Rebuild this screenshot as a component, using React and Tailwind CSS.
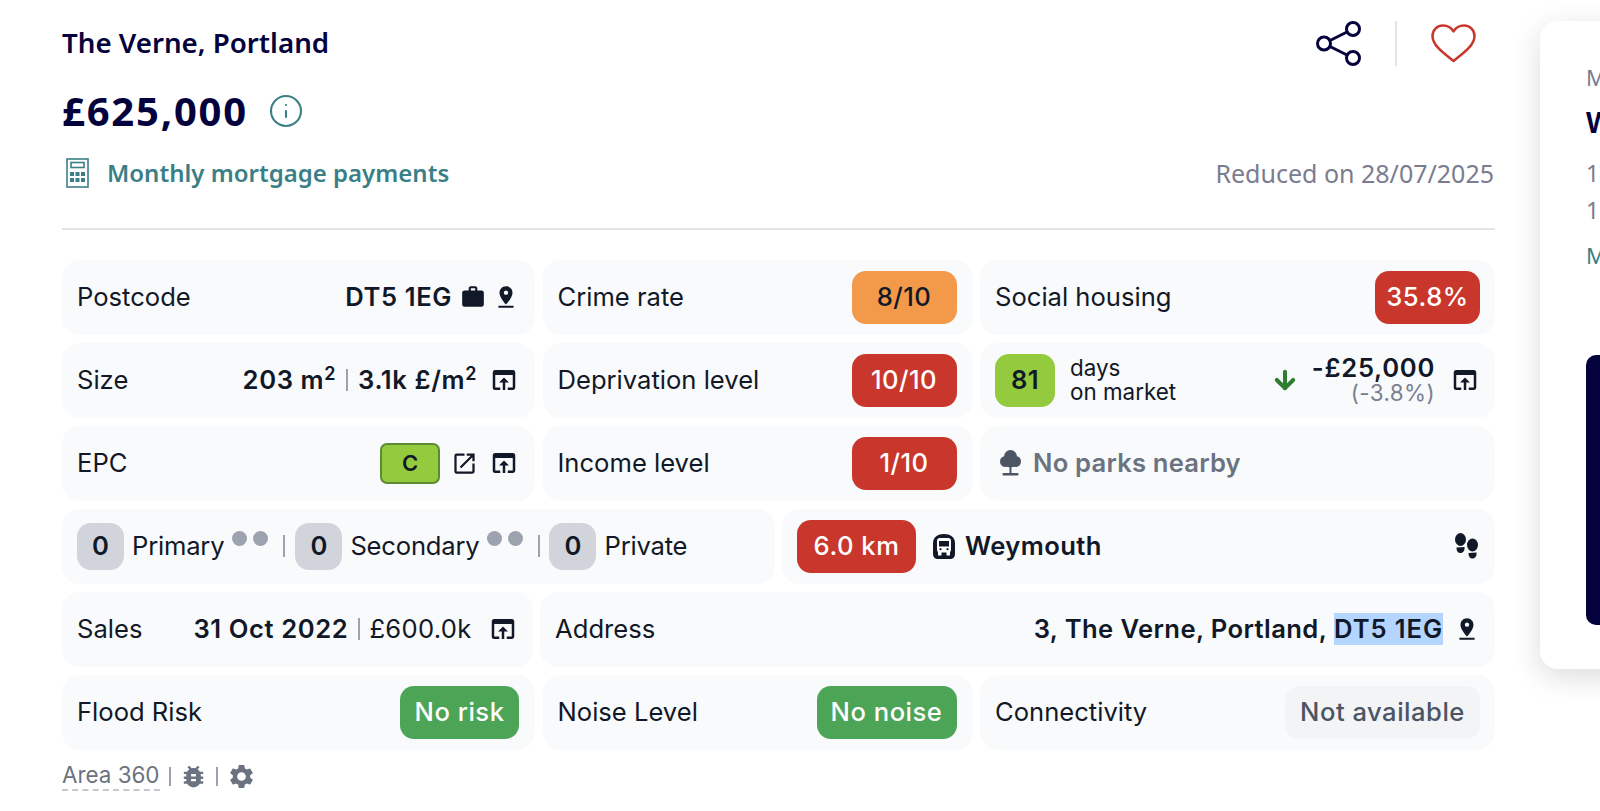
import { ArrowDown, Info } from 'lucide-react'
import { MdWork, MdPinDrop, MdOpenInBrowser, MdOpenInNew, MdBugReport, MdSettings } from 'react-icons/md'

const inter = 'font-["Inter","Liberation_Sans",sans-serif]'
const head = 'font-["Noto_Sans","Open_Sans",sans-serif]'

function Cell({ className = '', children }) {
  return (
    <div className={`flex h-[75px] items-center rounded-[18px] bg-[#f9fafb] px-[15px] ${className}`}>
      {children}
    </div>
  )
}

function Badge({ className = '', children }) {
  return (
    <span className={`flex h-[53px] items-center justify-center rounded-[14px] text-[25.6px] font-medium tracking-[0.5px] ${className}`}>
      {children}
    </span>
  )
}

function School({ label, dots }) {
  return (
    <>
      <span className="flex h-[47px] w-[47px] items-center justify-center rounded-[14px] bg-[#d1d5db] font-semibold">0</span>
      <span className="ml-[8px] tracking-[-0.2px]">{label}</span>
      {dots && (
        <span className="mb-[16px] ml-[8px] flex gap-[6px]">
          <i className="h-[15px] w-[15px] rounded-full bg-[#9ca3af]" />
          <i className="h-[15px] w-[15px] rounded-full bg-[#9ca3af]" />
        </span>
      )}
    </>
  )
}

function Sep({ className = 'mx-[11px]' }) {
  return <span className={`h-[22px] w-[2px] bg-[#9ca3af] ${className}`} />
}

function BrowserIcon({ className = '' }) {
  return <MdOpenInBrowser className={`h-[30px] w-[30px] shrink-0 ${className}`} />
}

function TreeIcon() {
  return (
    <svg className="h-[26px] w-[21px]" viewBox="0 0 21 26" fill="#4b5563">
      <circle cx="10.500" cy="6.500" r="6.500" />
      <circle cx="5.500" cy="11.500" r="5.500" />
      <circle cx="15.500" cy="11.500" r="5.500" />
      <circle cx="10.500" cy="11.500" r="6" />
      <rect x="9.500" y="15" width="2" height="8" />
      <rect x="2.500" y="23" width="16" height="2.500" rx="1" />
    </svg>
  )
}

function BusIcon() {
  return (
    <svg className="h-[25px] w-[22px]" viewBox="0 0 22 25">
      <path d="M11 0C17 0 22 3 22 9v11c0 3-2 5-5 5H5c-3 0-5-2-5-5V9C0 3 5 0 11 0Z" fill="#111827" />
      <rect x="4" y="4" width="14" height="14.500" rx="3" fill="#fff" />
      <rect x="6" y="7" width="10" height="5.500" fill="#111827" />
      <rect x="5" y="18" width="3.500" height="3.500" fill="#fff" />
      <rect x="13.500" y="18" width="3.500" height="3.500" fill="#fff" />
      <circle cx="7.500" cy="15.200" r="1.100" fill="#111827" />
      <circle cx="14.500" cy="15.200" r="1.100" fill="#111827" />
    </svg>
  )
}

function Sole({ x, y }) {
  return (
    <g transform={`translate(${x} ${y})`}>
      <ellipse cx="5.500" cy="6.500" rx="5.500" ry="6.500" />
      <path d="M1.500 14.500 9.500 14c.4 3.500-1.300 6-4 6S1.300 18 1.500 14.500Z" />
    </g>
  )
}

function StepsIcon() {
  return (
    <svg className="h-[26px] w-[23px]" viewBox="0 0 23 26" fill="#111827">
      <Sole x={0} y={0} />
      <Sole x={12} y={5.500} />
    </svg>
  )
}

export default function App() {
  return (
    <div className="flex h-[811px] overflow-hidden bg-white text-[#111827]">
      <div className={`ml-[62px] w-[1433px] shrink-0 ${inter}`}>
        {/* Header */}
        <div className={`relative h-[230px] border-b-2 border-[#e2e4e8] text-[#04023c] ${head}`}>
          <h1 className="pt-[24px] text-[27.700px] font-semibold leading-[36px]">The Verne, Portland</h1>
          <div className="mt-[26px] flex h-[50px] items-center">
            <span className="text-[40px] font-bold leading-[50px] tracking-[1.800px]">£625,000</span>
            <Info className="ml-[20px] h-[36px] w-[36px] text-[#3b7f86]" strokeWidth={1.400} />
          </div>
          <div className="mt-[20.500px] flex items-center justify-between">
            <div className="flex items-center">
              <svg className="ml-[4px] h-[30px] w-[23px]" viewBox="0 0 23 30" fill="none" stroke="#3b7f86" strokeWidth="1.600">
                <rect x="1" y="1" width="21" height="28" />
                <rect x="5" y="4.500" width="13" height="5" />
                <g fill="#3b7f86" stroke="none">
                  <rect x="4" y="14" width="4" height="4" /><rect x="9.500" y="14" width="4" height="4" /><rect x="15" y="14" width="4" height="4" />
                  <rect x="4" y="20" width="4" height="4" /><rect x="9.500" y="20" width="4" height="4" /><rect x="15" y="20" width="4" height="4" />
                </g>
              </svg>
              <span className="ml-[18px] text-[24px] font-semibold leading-[32px] text-[#3b7f86]">Monthly mortgage payments</span>
            </div>
            <span className="mr-[1px] text-[25px] leading-[32px] text-[#7a7c8f]">Reduced on 28/07/2025</span>
          </div>
          <div className="absolute right-[19px] top-[21px] flex items-center">
            <svg className="h-[45px] w-[45px]" viewBox="0 0 45 45" fill="none" stroke="#04023c" strokeWidth="3">
              <circle cx="37" cy="8" r="6.500" /><circle cx="8" cy="22.500" r="6.500" /><circle cx="37" cy="37" r="6.500" />
              <path d="M14 19.500 31 11M14 25.500 31 34" />
            </svg>
            <span className="mx-[34px] h-[45px] w-[2px] bg-[#e2e4e8]" />
            <svg className="h-[39px] w-[45px]" viewBox="0 0 45 39" fill="none" stroke="#c9372c" strokeWidth="2.500">
              <path d="M22.500 37C11 28 1.500 21 1.500 12 1.500 5.500 6.500 1.500 12 1.500c4.500 0 8.500 2.500 10.500 6 2-3.500 6-6 10.500-6 5.500 0 10.500 4 10.500 10.500 0 9-9.500 16-21 25Z" strokeLinejoin="round" />
            </svg>
          </div>
        </div>

        {/* Facts */}
        <div className="mt-[29.500px] flex flex-col gap-[8px] text-[25.6px] leading-[32px]">
          <div className="flex gap-[7.500px]">
            <Cell className="w-[473px] justify-between pr-[16px]">
              <span>Postcode</span>
              <span className="flex items-center font-semibold tracking-[0.6px]">DT5 1EG<MdWork className="ml-[8px] h-[26px] w-[26px]" /><MdPinDrop className="ml-[7px] h-[26px] w-[26px]" /></span>
            </Cell>
            <Cell className="w-[430px] justify-between pr-[16px]">
              <span>Crime rate</span>
              <Badge className="w-[105px] bg-[#f2994a]">8/10</Badge>
            </Cell>
            <Cell className="flex-1 justify-between">
              <span>Social housing</span>
              <Badge className="w-[105px] bg-[#c9372c] text-white">35.8%</Badge>
            </Cell>
          </div>
          <div className="flex gap-[7.500px]">
            <Cell className="w-[473px] justify-between pr-[16px]">
              <span>Size</span>
              <span className="flex items-center">
                <b className="font-semibold tracking-[0.6px]">203 m<sup className="text-[18px]">2</sup></b>
                <Sep className="mx-[10px]" />
                <b className="font-semibold tracking-[0.6px]">3.1k £/m<sup className="text-[18px]">2</sup></b>
                <BrowserIcon className="ml-[12px]" />
              </span>
            </Cell>
            <Cell className="w-[430px] justify-between pr-[16px]">
              <span>Deprivation level</span>
              <Badge className="w-[105px] bg-[#c9372c] text-white">10/10</Badge>
            </Cell>
            <Cell className="flex-1">
              <Badge className="w-[60px] bg-[#94cb3e] font-semibold">81</Badge>
              <span className="ml-[15px] text-[22.400px] leading-[24px]">days<br />on market</span>
              <ArrowDown className="ml-auto h-[28px] w-[28px] text-[#2e7d32]" strokeWidth={3.500} />
              <span className="ml-[13px] flex flex-col items-end">
                <b className="text-[25.600px] font-semibold leading-[25px] tracking-[0.7px]">-£25,000</b>
                <span className="text-[22.400px] leading-[25px] tracking-[0.4px] text-[#7a808f]">(-3.8%)</span>
              </span>
              <BrowserIcon className="ml-[15px]" />
            </Cell>
          </div>
          <div className="flex gap-[7.500px]">
            <Cell className="w-[473px] justify-between pr-[16px]">
              <span>EPC</span>
              <span className="flex items-center">
                <span className="flex h-[41px] w-[60px] items-center justify-center rounded-[7px] border-2 border-[#5f8a35] bg-[#94cb3e] text-[22px] font-semibold">C</span>
                <MdOpenInNew className="ml-[11px] h-[27px] w-[27px]" />
                <BrowserIcon className="ml-[11px]" />
              </span>
            </Cell>
            <Cell className="w-[430px] justify-between pr-[16px]">
              <span>Income level</span>
              <Badge className="w-[105px] bg-[#c9372c] text-white">1/10</Badge>
            </Cell>
            <Cell className="flex-1">
              <span className="ml-[5px]"><TreeIcon /></span>
              <span className="ml-[12px] font-semibold tracking-[0.2px] text-[#6b7280]">No parks nearby</span>
            </Cell>
          </div>
          <div className="flex gap-[7.500px]">
            <Cell className="w-[712.500px]">
              <School label="Primary" dots />
              <Sep className="ml-[15px] mr-[10px]" />
              <School label="Secondary" dots />
              <Sep className="ml-[15px] mr-[9px]" />
              <School label="Private" />
            </Cell>
            <Cell className="flex-1">
              <Badge className="w-[119px] bg-[#c9372c] text-white">6.0 km</Badge>
              <span className="ml-[17px]"><BusIcon /></span>
              <span className="ml-[10px] font-semibold tracking-[0.4px]">Weymouth</span>
              <span className="ml-auto mr-[2px]"><StepsIcon /></span>
            </Cell>
          </div>
          <div className="flex gap-[7.500px]">
            <Cell className="w-[470.600px] justify-between">
              <span>Sales</span>
              <span className="flex items-center">
                <b className="font-semibold tracking-[0.6px]">31 Oct 2022</b>
                <Sep className="ml-[10px] mr-[9px]" />
                <span className="tracking-[0.3px]">£600.0k</span>
                <BrowserIcon className="ml-[16px]" />
              </span>
            </Cell>
            <Cell className="flex-1 justify-between">
              <span>Address</span>
              <span className="flex items-center font-semibold tracking-[0.4px]">
                3, The Verne, Portland,&nbsp;<span className="bg-[#b4d5fe] tracking-[0.9px]">DT5 1EG</span>
                <MdPinDrop className="ml-[11px] h-[26px] w-[26px]" />
              </span>
            </Cell>
          </div>
          <div className="flex gap-[7.500px]">
            <Cell className="w-[473px] justify-between pr-[16px]">
              <span>Flood Risk</span>
              <Badge className="w-[119px] bg-[#4ca456] text-white">No risk</Badge>
            </Cell>
            <Cell className="w-[430px] justify-between pr-[16px]">
              <span>Noise Level</span>
              <Badge className="w-[140px] bg-[#4ca456] text-white">No noise</Badge>
            </Cell>
            <Cell className="flex-1 justify-between">
              <span>Connectivity</span>
              <Badge className="w-[195px] bg-[#f3f4f6] text-[#4b5563]">Not available</Badge>
            </Cell>
          </div>
        </div>

        {/* Footer */}
        <div className="mt-[11.500px] flex items-center text-[22.400px] leading-[28px] text-[#6b7280]">
          <span className="border-b-2 border-dashed border-[#c4c7cd]">Area 360</span>
          <span className="ml-[9px] mr-[8px] h-[19px] w-[2px] bg-[#9ca3af]" />
          <MdBugReport className="h-[29px] w-[29px]" />
          <span className="ml-[8px] mr-[9px] h-[19px] w-[2px] bg-[#9ca3af]" />
          <MdSettings className="h-[29px] w-[29px]" />
        </div>
      </div>

      {/* Next card, cut off by the window */}
      <div className={`ml-[45px] mt-[21px] h-[648px] w-[200px] shrink-0 rounded-l-[18px] bg-white pl-[46px] pt-[44px] shadow-[0_8px_30px_rgba(0,0,0,0.14)] ${head}`}>
        <p className="text-[22px] leading-[24px] text-[#7a7c8f]">M</p>
        <p className="mt-[15px] text-[28px] font-bold leading-[36px] text-[#04023c]">W</p>
        <p className="mt-[15px] text-[23px] leading-[37px] text-[#7a7c8f]">1</p>
        <p className="text-[23px] leading-[37px] text-[#7a7c8f]">1</p>
        <p className="mt-[11px] text-[22px] leading-[30px] text-[#3b7f86]">M</p>
        <div className="mt-[84.500px] h-[270px] rounded-l-[10px] bg-[#04023c]" />
      </div>
    </div>
  )
}
